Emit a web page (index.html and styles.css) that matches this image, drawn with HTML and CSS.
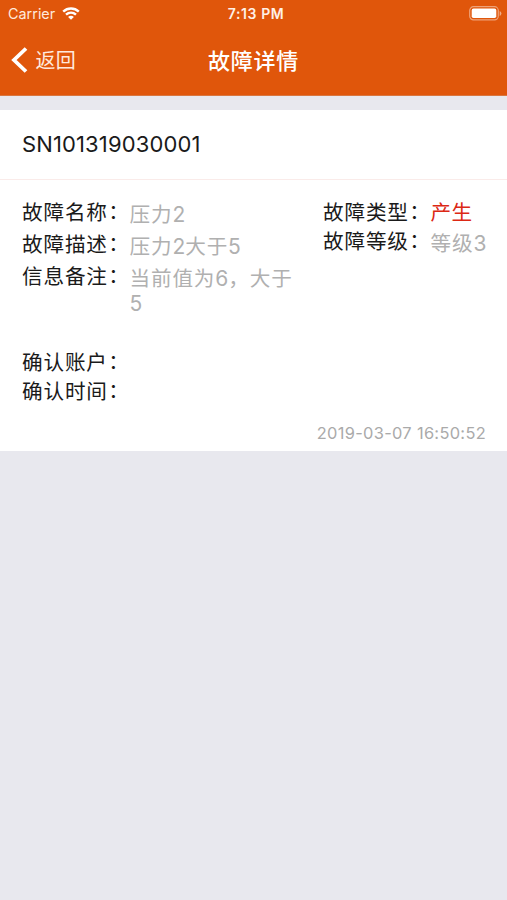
FILE: index.html
```html
<!DOCTYPE html>
<html lang="zh-CN">
<head>
<meta charset="utf-8">
<title>故障详情</title>
<link rel="stylesheet" href="styles.css">
</head>
<body>
<header class="header">
  <div class="status">
    <div class="carrier"><span>Carrier</span>
      <svg class="wifi" width="18" height="13" viewBox="0 0 18 13" fill="none" stroke="#fff" stroke-width="2.4"><path d="M1.2 4.7C5.7.5 12.3.5 16.8 4.7M4 7.7c2.9-2.7 7.1-2.7 10 0"/><path d="M6.1 9.9c1.7-1.5 4.1-1.5 5.8 0L9 12.8z" fill="#fff" stroke="none"/></svg>
    </div>
    <div class="clock">7:13 PM</div>
    <svg class="battery" width="33" height="15" viewBox="0 0 33 15"><rect x=".7" y=".7" width="28.6" height="13.2" rx="3.8" fill="none" stroke="#fff" stroke-opacity=".45" stroke-width="1.2"/><rect x="2.7" y="2.6" width="24.6" height="9.4" rx="1.8" fill="#fff"/><path d="M30.7 5v5q1.7-.8 1.7-2.5T30.7 5" fill="#fff" fill-opacity=".5"/></svg>
  </div>
  <nav class="nav">
    <a class="back"><svg width="17" height="26" viewBox="0 0 17 26" fill="none" stroke="#fff" stroke-width="3.8"><path d="M15 1.5 3 13l12 11.5"/></svg><span>返回</span></a>
    <h1 class="title">故障详情</h1>
  </nav>
</header>
<main class="card">
  <h2 class="serial">SN101319030001</h2>
  <div class="details">
    <dl class="column main-column">
      <div class="field"><dt>故障名称<span class="colon">：</span></dt><dd>压力<span class="num">2</span></dd></div>
      <div class="field"><dt>故障描述<span class="colon">：</span></dt><dd>压力<span class="num">2</span>大于<span class="num">5</span></dd></div>
      <div class="field"><dt>信息备注<span class="colon">：</span></dt><dd>当前值为<span class="num">6</span>，大于<br><span class="num">5</span></dd></div>
    </dl>
    <dl class="column side-column">
      <div class="field"><dt>故障类型<span class="colon">：</span></dt><dd class="alert">产生</dd></div>
      <div class="field"><dt>故障等级<span class="colon">：</span></dt><dd>等级<span class="num">3</span></dd></div>
    </dl>
  </div>
  <dl class="confirm">
    <div class="field"><dt>确认账户<span class="colon">：</span></dt></div>
    <div class="field"><dt>确认时间<span class="colon">：</span></dt></div>
  </dl>
  <time class="time">2019-03-07 16:50:52</time>
</main>
</body>
</html>
```
FILE: styles.css
```css
* { box-sizing: border-box; }
body {
  margin: 0;
  min-height: 900px;
  background: #e8e8ee;
  color: #1a1a1a;
  font-family: Inter, "Noto Sans CJK SC", sans-serif;
}
h1, h2, dl, dd { margin: 0; font-weight: 400; }
.header { height: 96px; background: #e0560b; color: #fff; border-bottom: 1px solid #d9763f; }
.status {
  display: grid;
  grid-template-columns: 1fr auto 1fr;
  align-items: center;
  height: 27px;
  padding: 0 5px 0 8px;
  font-size: 14.4px;
}
.carrier { display: flex; align-items: center; gap: 7px; color: #ffe9dc; }
.clock { padding-left: 2px; font-size: 14px; font-weight: 600; color: #fff0e6; letter-spacing: .6px; }
.battery { justify-self: end; }
.nav {
  display: grid;
  grid-template-columns: 1fr auto 1fr;
  align-items: center;
  height: 66px;
}
.back { display: flex; align-items: center; gap: 7.5px; padding-left: 11px; font-size: 20px; line-height: 30px; color: #ffe9dc; letter-spacing: .3px; }
.back span { padding-top: 1px; }
.title { padding-top: 1px; font-size: 22px; line-height: 30px; font-weight: 500; letter-spacing: .8px; }
.card { height: 341px; margin-top: 14px; background: #fff; }
.serial {
  height: 70px;
  padding-left: 22px;
  border-bottom: 1px solid #faebe9;
  font-size: 22px;
  line-height: 69px;
  letter-spacing: .13px;
}
.details { display: flex; height: 168px; padding: 18px 0 0 22px; }
.main-column { width: 301px; gap: 3.2px; }
.column { display: flex; flex-direction: column; }
.field { display: flex; min-height: 29px; font-size: 20.6px; line-height: 29px; letter-spacing: .85px; white-space: nowrap; }
dt { width: 107.5px; flex: none; }
.colon { display: inline-block; transform: translate(.5px, -1px); }
dd { padding-top: 4px; line-height: 25px; color: #b0b0b0; }
.num { font-size: 21px; letter-spacing: 0; }
.side-column .alert { padding-top: 0; line-height: 29px; color: #dc2815; letter-spacing: .3px; }
.confirm { padding-left: 22px; }
.time { display: block; margin-top: 17px; padding-right: 21px; text-align: right; font-size: 16.4px; line-height: 20px; letter-spacing: .32px; color: #aaa; }
```
